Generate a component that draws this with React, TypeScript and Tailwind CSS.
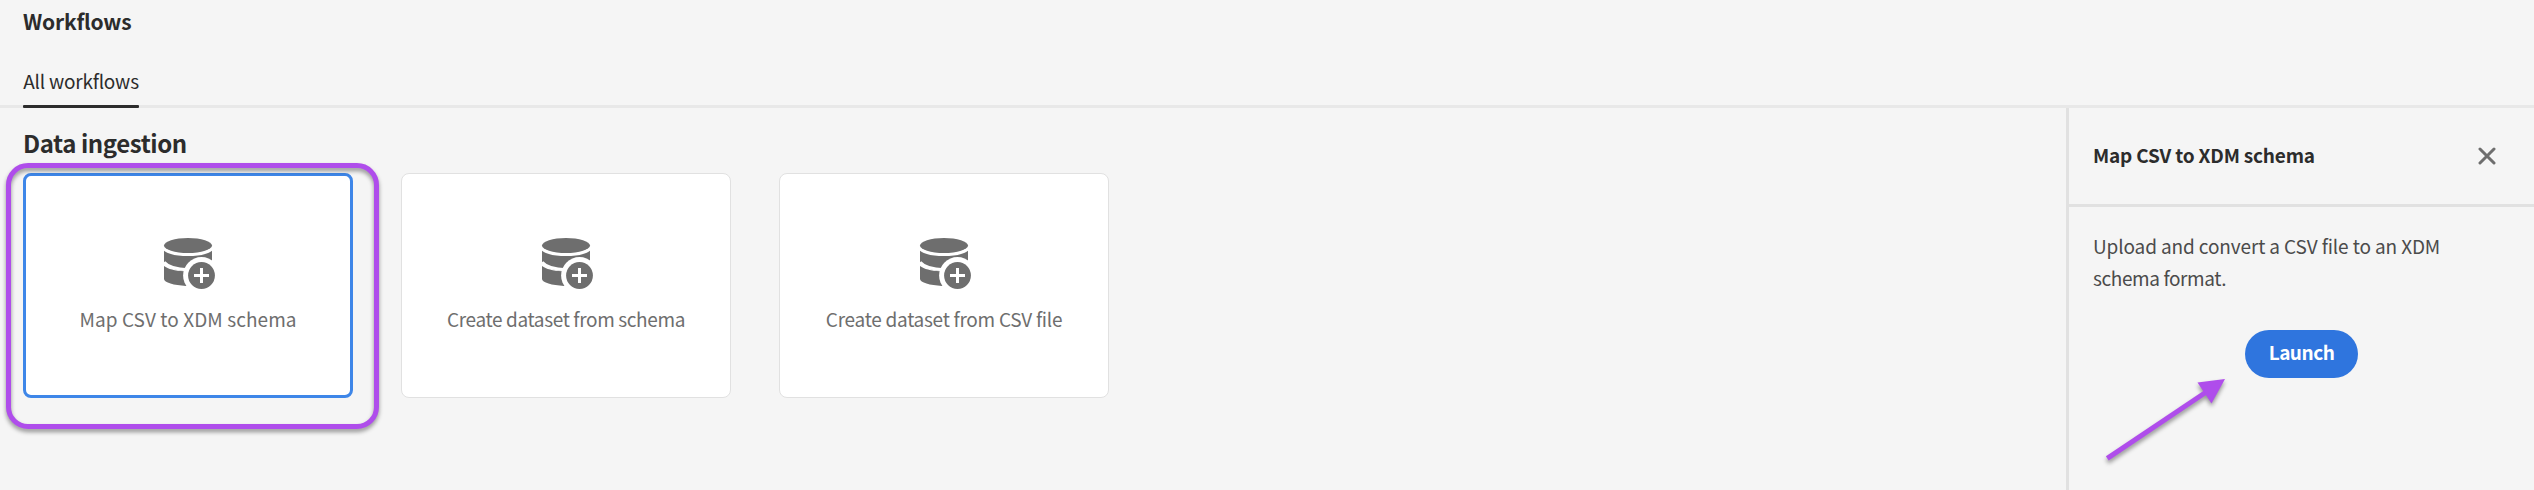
function DatasetAddIcon() {
  return (
    <svg viewBox="0 0 56 56" className="block h-14 w-14" fill="#6e6e6e" aria-hidden="true">
      <ellipse cx="28" cy="11.5" rx="24" ry="7.5" />
      <path d="M4 16.8C8 20.3 17 22.1 28 22.1S48 20.3 52 16.8V37H24C14 35.6 7 33 4 28.7Z" />
      <path d="M4 32C8 35 15 36.9 24 37.3L32 37.5V51.8L26 51.9C14 51.3 4 48.6 4 45Z" />
      <path d="M4 28.2C8 32.8 16 35.3 28 35.8" fill="none" stroke="#fff" strokeWidth="3.2" />
      <circle cx="41.5" cy="41.5" r="18.4" fill="#fff" />
      <circle cx="41.5" cy="41.5" r="13.4" />
      <path d="M41.5 34v15M34 41.5h15" stroke="#fff" strokeWidth="3" />
    </svg>
  );
}

const workflows = [
  { name: "Map CSV to XDM schema", spacing: "tracking-[0.08px]", selected: true },
  { name: "Create dataset from schema", spacing: "tracking-[-0.36px]", selected: false },
  { name: "Create dataset from CSV file", spacing: "tracking-[-0.27px]", selected: false },
];

export default function App() {
  return (
    <div className="flex h-[490px] w-full flex-col overflow-hidden bg-[#f5f5f5] font-['Noto_Sans_CJK_SC','Source_Sans_Pro',sans-serif] text-[19px] text-[#2c2c2c]">
      <header className="flex h-[108px] shrink-0 flex-col justify-between border-b-[3px] border-[#e8e8e8] px-[23px] pt-[9px]">
        <h1 className="text-[21px] leading-6 font-bold tracking-[-0.2px]">Workflows</h1>
        <nav className="-mb-[3px] flex">
          <button className="flex h-[39px] w-[116px] flex-col justify-between whitespace-nowrap">
            <span className="leading-6 tracking-[-0.2px]">All workflows</span>
            <span className="h-[3px] w-full rounded-[1px] bg-[#2c2c2c]" />
          </button>
        </nav>
      </header>
      <div className="flex min-h-0 flex-1">
        <main className="flex-1 pt-5 pl-[23px]">
          <h2 className="text-[24px] leading-[30px] font-bold tracking-[-0.42px]">Data ingestion</h2>
          <div className="mt-[15px] flex gap-12">
            {workflows.map((w) => (
              <div key={w.name} className="relative">
                <div
                  className={
                    w.selected
                      ? "flex h-[225px] w-[330px] flex-col items-center rounded-[8px] border-[3px] border-[#3e86e8] bg-white pt-[58px]"
                      : "flex h-[225px] w-[330px] flex-col items-center rounded-[8px] border border-[#e1e1e1] bg-white pt-[60px]"
                  }
                >
                  <DatasetAddIcon />
                  <span className={`mt-[17px] leading-6 whitespace-nowrap text-[#6e6e6e] ${w.spacing}`}>{w.name}</span>
                </div>
                {w.selected && (
                  <div className="pointer-events-none absolute -top-[10px] -left-[17px] h-[266px] w-[373px] rounded-[22px] border-[5px] border-[#af4deb] drop-shadow-[0_3px_2px_rgba(0,0,0,0.4)]" />
                )}
              </div>
            ))}
          </div>
        </main>
        <aside className="relative flex w-[468px] flex-col border-l-[3px] border-[#e1e1e1]">
          <div className="flex h-[99px] shrink-0 items-center justify-between border-b-[3px] border-[#e1e1e1] pr-[38px] pl-6">
            <h3 className="-mt-[2px] leading-6 font-bold tracking-[-0.19px]">Map CSV to XDM schema</h3>
            <svg viewBox="0 0 18 18" className="h-[18px] w-[18px]" aria-label="Close">
              <path d="M2 2l14 14M16 2L2 16" fill="none" stroke="#6e6e6e" strokeWidth="3" strokeLinecap="round" />
            </svg>
          </div>
          <div className="flex flex-col pt-[23px] pl-6 leading-8 text-[#4b4b4b]">
            <span className="tracking-[-0.12px]">Upload and convert a CSV file to an XDM</span>
            <span className="tracking-[-0.4px]">schema format.</span>
          </div>
          <button className="mt-[36px] ml-[176px] h-12 w-[113px] rounded-full bg-[#2f75de] pb-1 leading-6 font-bold tracking-[-0.5px] text-white">
            Launch
          </button>
          <svg
            viewBox="0 0 140 100"
            className="pointer-events-none absolute top-[262px] left-[31px] h-[100px] w-[140px] drop-shadow-[0_3px_2px_rgba(0,0,0,0.4)]"
            aria-hidden="true"
          >
            <path d="M7.3 88.4L107 21.5" stroke="#af4deb" strokeWidth="5" fill="none" />
            <path d="M125 9L97.5 12.5L111.5 33.5Z" fill="#af4deb" />
          </svg>
        </aside>
      </div>
    </div>
  );
}
